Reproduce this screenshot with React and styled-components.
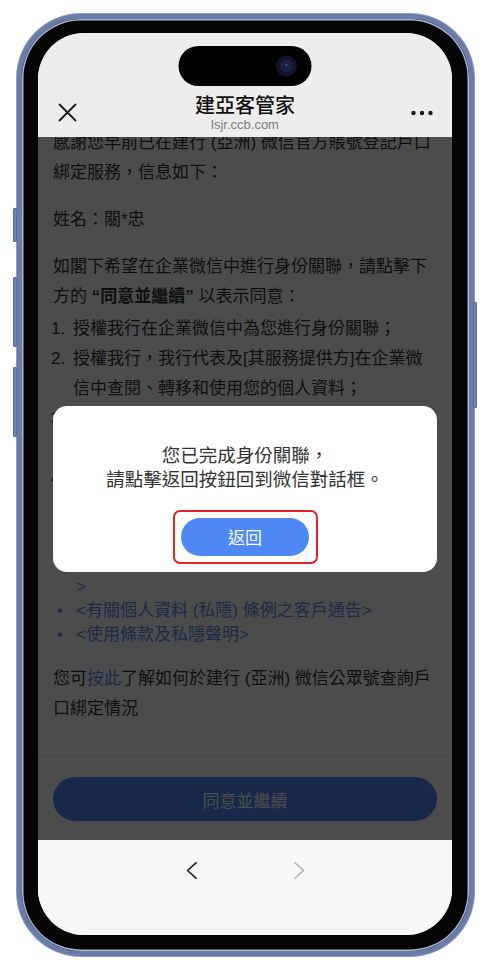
import React from 'react'
import styled, { createGlobalStyle } from 'styled-components'

const GlobalStyle = createGlobalStyle`
  html, body {
    margin: 0;
    padding: 0;
    background: #ffffff;
  }
  body {
    font-family: "Liberation Sans", "Noto Sans CJK TC", sans-serif;
  }
  * { box-sizing: border-box; }
`

const Stage = styled.div`
  width: 491px;
  height: 971px;
  padding: 14px 17px 0;
`

const Phone = styled.div`
  position: relative;
  width: 457px;
  height: 942px;
  border: 5px solid #6a7da6;
  border-radius: 64px;
  background: #050505;
  padding: 14px 17px 16px 16px;
  box-shadow: inset 0 0 0 1.5px #a9b7d3, 0 0 0 1px #8c9dc1;
`

const SideKey = styled.div`
  position: absolute;
  width: 4px;
  border-radius: 1px;
  background: #7184ad;
  border: 1px solid #5b6d96;
  top: ${p => p.$top}px;
  height: ${p => p.$h}px;
  ${p => (p.$right ? 'right: -8px;' : 'left: -9px;')}
`

const Screen = styled.div`
  position: relative;
  height: 100%;
  border-radius: 46px;
  overflow: hidden;
  background: #ededed;
  display: flex;
  flex-direction: column;
`

const StatusBar = styled.div`
  flex: none;
  height: 55px;
  background: #ededed;
`

const Island = styled.div`
  position: absolute;
  top: 13px;
  left: 50%;
  transform: translateX(-50%);
  width: 133px;
  height: 40px;
  border-radius: 20px;
  background: #000;
  display: flex;
  align-items: center;
  justify-content: flex-end;
  padding-right: 14px;
  z-index: 5;
`

const NavBar = styled.div`
  flex: none;
  height: 49px;
  display: grid;
  grid-template-columns: 70px 1fr 70px;
  align-items: center;
  background: #ededed;
`

const NavLeft = styled.div`
  padding-left: 20px;
  display: flex;
  align-items: center;
`

const NavRight = styled.div`
  padding-right: 19px;
  display: flex;
  justify-content: flex-end;
  align-items: center;
`

const TitleBlock = styled.div`
  text-align: center;
  padding-top: 1px;
`

const Title = styled.div`
  font-family: "Noto Sans CJK TC", sans-serif;
  font-size: 20px;
  line-height: 24px;
  font-weight: 500;
  color: #111;
`

const SubTitle = styled.div`
  font-size: 13px;
  line-height: 16px;
  color: #7c7c7c;
`

const WebView = styled.div`
  position: relative;
  flex: 1;
  min-height: 0;
  overflow: hidden;
  background: #fff;
  display: flex;
  flex-direction: column;
`

const Article = styled.div`
  flex: 1;
  min-height: 0;
  overflow: hidden;
  margin-top: -9px;
  padding: 0 15px;
  font-size: 17px;
  line-height: 30px;
  color: #333;
`

const Para = styled.p`
  margin: ${p => (p.$first ? '0' : '17px')} 0 ${p => (p.$tight ? '0' : '17px')};
`

const Strong = styled.b`
  font-weight: 700;
`

const Link = styled.span`
  color: #5b8def;
`

const Steps = styled.ol`
  list-style: none;
  margin: 2px 0 0;
  padding: 0;
`

const Step = styled.li`
  display: flex;
`

const Marker = styled.span`
  flex: none;
  width: 22px;
  margin-left: -2px;
  padding-right: 2px;
`

const StepText = styled.span`
  flex: 1;
`

const Bullets = styled.ul`
  list-style: none;
  margin: 3px 0 0;
  padding: 0;
  line-height: 24px;
  color: #5b8def;
`

const Bullet = styled.li`
  display: flex;
`

const Dot = styled.span`
  flex: none;
  width: 23px;
  padding-left: 4px;
`

const Footer = styled.div`
  flex: none;
  height: 85px;
  border-top: 1px solid #e6e6e6;
  padding: 21px 15px 0;
  background: #fff;
`

const AgreeButton = styled.button`
  width: 100%;
  height: 44px;
  border: none;
  border-radius: 22px;
  background: #5085f7;
  color: #fff;
  font-family: "Noto Sans CJK TC", sans-serif;
  font-size: 17px;
`

const Overlay = styled.div`
  position: absolute;
  inset: 0;
  background: rgba(0, 0, 0, 0.7);
  display: flex;
  align-items: center;
  justify-content: center;
`

const Modal = styled.div`
  width: 384px;
  background: #fff;
  border-radius: 14px;
  padding: 36px 0 8px;
  display: flex;
  flex-direction: column;
  align-items: center;
`

const ModalText = styled.div`
  font-family: "Noto Sans CJK TC", sans-serif;
  font-size: 18.5px;
  line-height: 24px;
  color: #333;
  text-align: center;
`

const Highlight = styled.div`
  margin-top: 20px;
  border: 2px solid #e5232b;
  border-radius: 7px;
  padding: 6px 6.5px;
`

const BackButton = styled.button`
  display: block;
  width: 128px;
  height: 38px;
  border: none;
  border-radius: 19px;
  background: #4d88f5;
  color: #fff;
  font-family: "Noto Sans CJK TC", sans-serif;
  font-size: 17px;
`

const Toolbar = styled.div`
  flex: none;
  height: 95px;
  background: #f7f7f7;
  display: flex;
  justify-content: center;
  align-items: flex-start;
  gap: 97px;
  padding-top: 22px;
`

const Camera = () => (
  <svg width="22" height="22" viewBox="0 0 22 22">
    <circle cx="11" cy="11" r="10.5" fill="#12122a" />
    <circle cx="11" cy="11" r="6.5" fill="#1c1f42" />
    <circle cx="11" cy="10" r="1" fill="#4a5a8a" />
  </svg>
)

const CloseIcon = () => (
  <svg width="19" height="19" viewBox="0 0 19 19">
    <path d="M1.5 1.5 L17.5 17.5 M17.5 1.5 L1.5 17.5" stroke="#1a1a1a" strokeWidth="1.8" strokeLinecap="round" />
  </svg>
)

const MoreIcon = () => (
  <svg width="22" height="6" viewBox="0 0 22 6">
    <circle cx="2.5" cy="3" r="2.2" fill="#1a1a1a" />
    <circle cx="11" cy="3" r="2.2" fill="#1a1a1a" />
    <circle cx="19.5" cy="3" r="2.2" fill="#1a1a1a" />
  </svg>
)

const Chevron = ({ dir, color }) => (
  <svg width="11" height="17" viewBox="0 0 11 17">
    <path
      d={dir === 'left' ? 'M10 0.8 L1.5 8.5 L10 16.2' : 'M1 0.8 L9.5 8.5 L1 16.2'}
      fill="none"
      stroke={color}
      strokeWidth="1.6"
      strokeLinecap="round"
      strokeLinejoin="round"
    />
  </svg>
)

const steps = [
  '授權我行在企業微信中為您進行身份關聯；',
  '授權我行，我行代表及[其服務提供方]在企業微信中查閱、轉移和使用您的個人資料；',
  '授權我行透過企業微信向您發送有關產品及服務的資訊；',
  '您確認已細閱、明白並同意接受以下有關條款及聲明的全部內容：',
]

function App() {
  return (
    <>
      <GlobalStyle />
      <Stage>
        <Phone>
          <SideKey $top={189} $h={34} />
          <SideKey $top={258} $h={70} />
          <SideKey $top={348} $h={70} />
          <SideKey $right $top={283} $h={106} />
          <Screen>
            <Island>
              <Camera />
            </Island>
            <StatusBar />
            <NavBar>
              <NavLeft>
                <CloseIcon />
              </NavLeft>
              <TitleBlock>
                <Title>建亞客管家</Title>
                <SubTitle>lsjr.ccb.com</SubTitle>
              </TitleBlock>
              <NavRight>
                <MoreIcon />
              </NavRight>
            </NavBar>
            <WebView>
              <Article>
                <Para $first>感謝您早前已在建行 (亞洲) 微信官方賬號登記戶口綁定服務，信息如下：</Para>
                <Para>姓名：關*忠</Para>
                <Para $tight>
                  如閣下希望在企業微信中進行身份關聯，請點擊下方的 <Strong>“同意並繼續”</Strong> 以表示同意：
                </Para>
                <Steps>
                  {steps.map((s, i) => (
                    <Step key={i}>
                      <Marker>{i + 1}.</Marker>
                      <StepText>{s}</StepText>
                    </Step>
                  ))}
                </Steps>
                <Bullets>
                  <Bullet>
                    <Dot>•</Dot>
                    <span>
                      &lt;中國建設銀行 (亞洲) 股份有限公司企業微信客戶身份關聯服務條款及細則
                      <br />
                      &gt;
                    </span>
                  </Bullet>
                  <Bullet>
                    <Dot>•</Dot>
                    <span>&lt;有關個人資料 (私隱) 條例之客戶通告&gt;</span>
                  </Bullet>
                  <Bullet>
                    <Dot>•</Dot>
                    <span>&lt;使用條款及私隱聲明&gt;</span>
                  </Bullet>
                </Bullets>
                <Para>
                  您可<Link>按此</Link>了解如何於建行 (亞洲) 微信公眾號查詢戶口綁定情況
                </Para>
              </Article>
              <Footer>
                <AgreeButton>同意並繼續</AgreeButton>
              </Footer>
              <Overlay>
                <Modal>
                  <ModalText>
                    您已完成身份關聯，
                    <br />
                    請點擊返回按鈕回到微信對話框。
                  </ModalText>
                  <Highlight>
                    <BackButton>返回</BackButton>
                  </Highlight>
                </Modal>
              </Overlay>
            </WebView>
            <Toolbar>
              <Chevron dir="left" color="#1a1a1a" />
              <Chevron dir="right" color="#b3b3b3" />
            </Toolbar>
          </Screen>
        </Phone>
      </Stage>
    </>
  )
}

export default App
